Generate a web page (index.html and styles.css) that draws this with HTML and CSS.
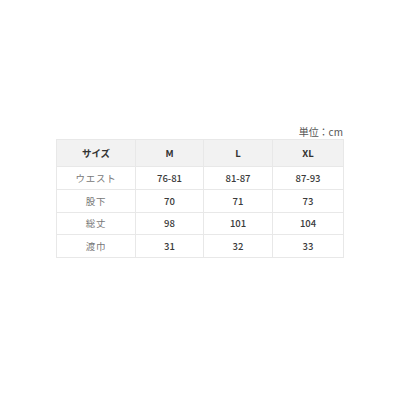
FILE: index.html
```html
<!DOCTYPE html>
<html lang="ja">
<head>
<meta charset="utf-8">
<link rel="stylesheet" href="styles.css">
</head>
<body>
<div class="wrap">
  <div class="unit">単位：cm</div>
  <table class="size">
    <colgroup><col class="c0"><col class="c1"><col class="c2"><col class="c3"></colgroup>
    <thead>
      <tr><th>サイズ</th><th>M</th><th>L</th><th>XL</th></tr>
    </thead>
    <tbody>
      <tr><td class="lbl">ウエスト</td><td>76-81</td><td>81-87</td><td>87-93</td></tr>
      <tr><td class="lbl">股下</td><td>70</td><td>71</td><td>73</td></tr>
      <tr><td class="lbl">総丈</td><td>98</td><td>101</td><td>104</td></tr>
      <tr><td class="lbl">渡巾</td><td>31</td><td>32</td><td>33</td></tr>
    </tbody>
  </table>
</div>
</body>
</html>
```
FILE: styles.css
```css
html, body { margin: 0; padding: 0; background: #fff; }
body { font-family: "Noto Sans CJK JP", "Noto Sans", sans-serif; color: #444; }
.wrap { width: 287px; margin: 125px 0 0 56px; }
.unit { text-align: right; font-size: 10px; line-height: 13px; color: #555; margin-bottom: 1px; }
.size { width: 287px; border-collapse: collapse; table-layout: fixed; font-size: 9.5px; }
.c0 { width: 79px; } .c1 { width: 68px; } .c2 { width: 69px; } .c3 { width: 71px; }
.size th, .size td { border: 1px solid #e8e8e8; text-align: center; padding: 0; }
.size th { background: #f2f2f2; height: 26px; font-weight: bold; color: #333; }
.size td { height: 21.75px; color: #3a3a3a; font-weight: 500; }
.size td.lbl { color: #777; font-weight: 400; letter-spacing: 0.8px; }
```
